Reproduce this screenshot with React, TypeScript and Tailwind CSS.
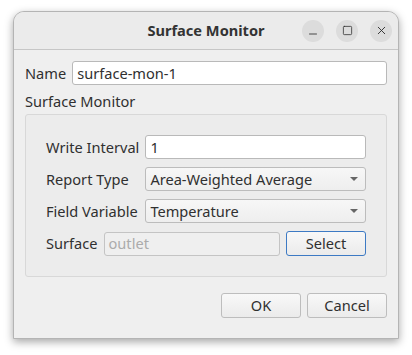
import { Minus, Square, X } from "lucide-react";

function Field({ value }: { value: string }) {
  return (
    <div className="flex h-[24px] items-center rounded-[3px] border border-[#b9b9b9] bg-white px-[4px] text-[#303030]">
      {value}
    </div>
  );
}

function Combo({ value }: { value: string }) {
  return (
    <div className="flex h-[24px] items-center justify-between rounded-[3px] border border-[#bcbcbc] bg-gradient-to-b from-[#f7f7f7] to-[#eeeeee] pl-[4px] pr-[7px] text-[#303030]">
      <span>{value}</span>
      <svg width="8" height="4" viewBox="0 0 8 4">
        <path d="M0 0h8L4 4z" fill="#666666" />
      </svg>
    </div>
  );
}

function Button({ label, focus }: { label: string; focus?: boolean }) {
  return (
    <button
      className={
        "flex h-[25px] w-[80px] items-center justify-center rounded-[3px] border bg-gradient-to-b from-[#f8f8f8] to-[#ebebeb] text-[#303030] " +
        (focus ? "border-[#3d7ac4]" : "border-[#bdbdbd]")
      }
    >
      {label}
    </button>
  );
}

export default function App() {
  return (
    <div
      className="h-[355px] w-[412px] bg-white pl-[13px] pt-[11px] text-[14.6px] leading-[17px]"
      style={{ fontFamily: '"Noto Sans", "Open Sans", sans-serif' }}
    >
      <div className="flex h-[328px] w-[386px] flex-col overflow-hidden rounded-t-[11px] border border-[#b4b4b4] bg-[#efefef] shadow-[0_3px_9px_rgba(0,0,0,0.35)]">
        <div className="grid h-[38px] shrink-0 grid-cols-[1fr_auto_1fr] items-center border-b border-[#c6c6c6] bg-[#ebebeb]">
          <div />
          <div className="text-[14.6px] font-bold text-[#333333]">Surface Monitor</div>
          <div className="flex justify-end gap-[12px] pr-[6px]">
            <div className="flex h-[22px] w-[22px] items-center justify-center rounded-full bg-[#dcdcdc]">
              <Minus size={12} strokeWidth={1.7} color="#2e2e2e" className="translate-y-[3px]" />
            </div>
            <div className="flex h-[22px] w-[22px] items-center justify-center rounded-full bg-[#dcdcdc]">
              <Square size={11} strokeWidth={1.7} color="#2e2e2e" />
            </div>
            <div className="flex h-[22px] w-[22px] items-center justify-center rounded-full bg-[#dcdcdc]">
              <X size={13} strokeWidth={1.7} color="#2e2e2e" />
            </div>
          </div>
        </div>

        <div className="flex flex-1 flex-col px-[11px] pt-[11px] text-[#303030]">
          <div className="flex items-center gap-[6px]">
            <span>Name</span>
            <div className="flex-1">
              <Field value="surface-mon-1" />
            </div>
          </div>

          <div className="mt-[8px] h-[17px]">Surface Monitor</div>

          <div className="mt-[4px] flex flex-col gap-[8px] rounded-[3px] border border-[#d8d8d8] bg-[#ececec] px-[20px] pb-[20px] pt-[20px]">
            <div className="grid grid-cols-[auto_1fr] items-center gap-x-[6px] gap-y-[8px]">
              <span>Write Interval</span>
              <Field value="1" />
              <span>Report Type</span>
              <Combo value="Area-Weighted Average" />
              <span>Field Variable</span>
              <Combo value="Temperature" />
            </div>
            <div className="flex items-center gap-[6px]">
              <span>Surface</span>
              <div className="flex h-[24px] flex-1 items-center rounded-[3px] border border-[#c4c4c4] bg-[#efefef] px-[4px] text-[#ababab]">
                outlet
              </div>
              <Button label="Select" focus />
            </div>
          </div>

          <div className="mt-[16px] flex justify-end gap-[6px]">
            <Button label="OK" />
            <Button label="Cancel" />
          </div>
        </div>
      </div>
    </div>
  );
}
